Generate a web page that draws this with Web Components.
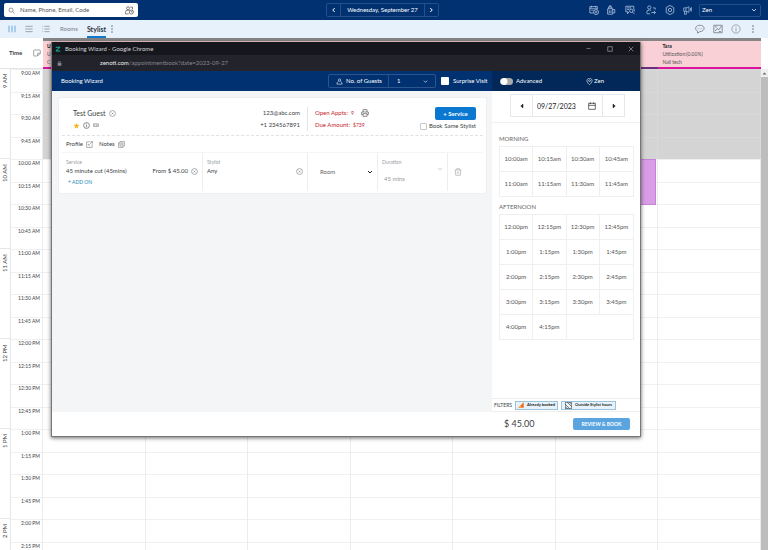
<!DOCTYPE html>
<html lang="en">
<head>
<meta charset="utf-8">
<title>Appointment Book</title>
<style>
html,body{margin:0;height:100%}
body{font-family:Lato,"Liberation Sans",sans-serif;font-size:6px;line-height:8px;color:#3c3f45;background:#fff;overflow:hidden}
</style>
</head>
<body>
<appointment-book></appointment-book>
<script>
const BASE = `<style>
*{box-sizing:border-box}
button,input,select{font:inherit;color:inherit;margin:0;padding:0;border:0;background:none;border-radius:0;outline:0}
select{appearance:none}
button{display:flex;align-items:center;justify-content:center}
</style>`;
function define(name, html, init) {
  const t = document.createElement('template');
  t.innerHTML = BASE + html;
  customElements.define(name, class extends HTMLElement {
    constructor() {
      super();
      this.attachShadow({mode: 'open'}).append(t.content.cloneNode(true));
    }
    connectedCallback() { if (init && !this.ready) { this.ready = true; init(this, this.shadowRoot); } }
  });
}

const ICONS = {
  search: '<circle cx="10.5" cy="10.5" r="7"/><path d="M16 16l6 6"/>',
  guests: '<circle cx="8" cy="6" r="4"/><path d="M1 21v-4q0-6 7-6 3 0 4 1M1 21h9"/><circle cx="17" cy="16" r="5.5"/><path d="M17 13v3h3M14 3h6v6"/>',
  left: '<path d="M15 4l-8 8 8 8"/>', right: '<path d="M9 4l8 8-8 8"/>', down: '<path d="M4 8l8 8 8-8"/>',
  calplus: '<path d="M20 10V4H2v15h9M2 9h18M6 2v4M16 2v4M6 13h3M11 13h2"/><circle cx="17" cy="17" r="6"/><path d="M17 14v6M14 17h6"/>',
  drink: '<path d="M4 9h12v13H4zM6 9V5h8v4M8 5V2h4v3M16 11h5v8h-5M8 13v6M12 13v6"/>',
  chatsearch: '<path d="M21 10V3H2v13h4v5l4-5M5 7h10M5 11h5"/><circle cx="15" cy="14" r="4"/><path d="M18 17l5 5M22 10v6"/>',
  walkin: '<circle cx="8" cy="6" r="4"/><path d="M2 20v-3q0-5 6-5 3 0 4 2M2 21h8M13 18h9M19 14l4 4-4 4M17 7h5v4"/>',
  gear: '<path d="M12 1l9 5v12l-9 5-9-5V6z"/><circle cx="12" cy="12" r="4"/>',
  horn: '<path d="M2 5h6l8-3v15l-8-3H2zM4 14v8h5v-8M8 5v9M20 5v8M23 3v12"/>',
  chat: '<path d="M12 3c13 0 13 15 0 15l-6 4v-5C-2 13 1 3 12 3z"/><path d="M7 11h1M11.500 11h1M16 11h1" stroke-width="3"/>',
  chart: '<path d="M2 3h20v18H2z"/><path d="M5 17l5-6 4 3 6-9M14 18h5M5 7h5"/>',
  info: '<circle cx="12" cy="12" r="10"/><path d="M12 10v8M12 6v2"/>',
  cols: '<path d="M3 2v20M12 2v20M21 2v20"/>', rows: '<path d="M1 4h22M1 12h22M1 20h22"/>',
  list: '<path d="M7 4h16M7 12h16M7 20h16M1 4h2M1 12h2M1 20h2"/>',
  dots: '<path d="M12 1v4M12 10v4M12 19v4" stroke-width="4"/>',
  note: '<path d="M13 21H4q-2 0-2-2V5q0-2 2-2h16q2 0 2 2v8l-8 8v-8h8"/>',
  person: '<circle cx="12" cy="7" r="4"/><path d="M9 11q-6 3-6 10h18q0-7-6-10"/>',
  pin: '<path d="M12 23C-4 9 5 1 12 1s16 8 0 22z"/><circle cx="12" cy="9" r="3"/>',
  close: '<circle cx="12" cy="12" r="10"/><path d="M9 9l6 6M15 9l-6 6"/>',
  star: '<path d="M12 3l3 6 7 1-5 5 1 7-6-3-6 3 1-7-5-5 7-1z" fill="#f2b929" stroke="none"/>',
  gift: '<path d="M2 7h20v11H2zM7 7v11M12 11h7M12 15h7"/>',
  profile: '<path d="M13 3H2v19h19V11M15 2h7v7M22 2l-8 8M6 12h5v6"/>',
  notes: '<path d="M7 2h15v15H7zM7 6H2v16h15v-5M10 7h9M10 11h9"/>',
  print: '<path d="M6 9V2h12v7M6 17H2V9h20v8h-4M6 14h12v8H6z"/>',
  trash: '<path d="M2 6h20M8 6V2h8v4M4 6l1 16h14l1-16M10 11v6M14 11v6"/>',
  calendar: '<path d="M2 4h20v18H2zM2 10h20M7 1v5M17 1v5"/>',
  tleft: '<path d="M16 4v16l-9-8z" fill="currentColor"/>', tright: '<path d="M8 4v16l9-8z" fill="currentColor"/>',
  tup: '<path d="M5 16h14l-7-8z" fill="currentColor"/>',
  lock: '<path d="M4 10h16v12H4z" fill="currentColor"/><path d="M7 10V3h10v7" stroke-width="3"/>',
  zed: '<path d="M3 3h18v3L8 18h13v4H3v-4L15 7H3z" fill="#12b5a0" stroke="none"/>',
  min: '<path d="M2 12h20"/>', max: '<path d="M3 3h18v18H3z"/>', x: '<path d="M3 3l18 18M21 3L3 21"/>',
  booked: '<path d="M1 23L23 1v22z" fill="#f06b22" stroke="none"/><path d="M1 23L12 12v11z" fill="#f9b13c" stroke="none"/>',
  hatch: '<path d="M1 1h22v22H1z"/><path d="M1 8l15 15M1 16l7 7M8 1l15 15M16 1l7 7"/>'
};
customElements.define('ui-icon', class extends HTMLElement {
  constructor() { super(); this.attachShadow({mode: 'open'}); }
  connectedCallback() {
    const s = this.getAttribute('size') || 8, w = this.getAttribute('weight') || 2;
    this.shadowRoot.innerHTML = `<style>:host{display:inline-flex;flex:none}svg{display:block}</style>
      <svg width="${s}" height="${s}" viewBox="0 0 24 24" fill="none" stroke="currentColor" stroke-width="${w}" aria-hidden="true">${ICONS[this.getAttribute('name')]}</svg>`;
  }
});

define('top-bar', `<style>
:host{display:grid;grid-template-columns:1fr auto 1fr;align-items:center;height:20px;padding:0 7px 0 4px;background:#013171;color:#fff}
.search{display:flex;align-items:center;gap:5px;width:134px;height:14px;padding:0 4px;background:#fff;border-radius:2px;color:#555;justify-self:start}
.search input{flex:1;min-width:0}
.search input::placeholder{color:#555;opacity:1}
.date{display:flex;height:14px;border:1px solid #24508c;border-radius:2px;align-items:stretch}
.date button{width:13px}
.date span{padding:0 6px;border:solid #24508c;border-width:0 1px;display:flex;align-items:center}
.right{justify-self:end;display:flex;align-items:center;gap:7px;color:#a9bfdd}
.right>button{width:10px}
.right>button.wide{width:14px}
.sel{display:flex;align-items:center;width:62px;height:13px;border:1px solid #24508c;border-radius:2px;padding:0 3px 0 2px;color:#fff}
.sel select{flex:1}
</style>
<label class="search"><ui-icon name="search" size="7"></ui-icon><input type="text" aria-label="Search" placeholder="Name, Phone, Email, Code"><ui-icon name="guests" size="9"></ui-icon></label>
<div class="date"><button aria-label="Previous day"><ui-icon name="left" size="6" weight="4"></ui-icon></button><span>Wednesday, September 27</span><button aria-label="Next day"><ui-icon name="right" size="6" weight="4"></ui-icon></button></div>
<div class="right">
<button aria-label="New appointment"><ui-icon name="calplus" size="10"></ui-icon></button>
<button aria-label="Refreshments"><ui-icon name="drink" size="10"></ui-icon></button>
<button class="wide" aria-label="Messages"><ui-icon name="chatsearch" size="10"></ui-icon></button>
<button class="wide" aria-label="Walk in"><ui-icon name="walkin" size="10"></ui-icon></button>
<button aria-label="Settings"><ui-icon name="gear" size="10"></ui-icon></button>
<button aria-label="Announcements"><ui-icon name="horn" size="9"></ui-icon></button>
<div class="sel"><select aria-label="Center"><option>Zen</option></select><ui-icon name="down" size="6" weight="3"></ui-icon></div>
</div>`);

define('view-bar', `<style>
:host{display:flex;align-items:center;justify-content:space-between;height:18px;padding:0 11px 0 8px;background:#e7f1fb;color:#777b83}
div{display:flex;align-items:center;height:100%}
.l{gap:9px}.l a{color:inherit;text-decoration:none;height:100%;display:flex;align-items:center}
.l a.on{font-weight:700;font-size:7px;color:#2d3138;box-shadow:inset 0 -2px #1479c9}
.v{gap:9px;margin-right:1px}
.l>button{margin-left:-7px}
.r{gap:8px}
</style>
<div class="l"><div class="v"><button aria-label="Columns" style="color:#2d86cf"><ui-icon name="cols"></ui-icon></button><button aria-label="Rows"><ui-icon name="rows"></ui-icon></button><button aria-label="List"><ui-icon name="list"></ui-icon></button></div>
<a href="#rooms">Rooms</a><a class="on" href="#stylist">Stylist</a><button aria-label="More views"><ui-icon name="dots"></ui-icon></button></div>
<div class="r"><button aria-label="Chat"><ui-icon name="chat" size="10"></ui-icon></button><button aria-label="Reports"><ui-icon name="chart" size="10"></ui-icon></button><button aria-label="Information"><ui-icon name="info" size="10" weight="1.500"></ui-icon></button><button aria-label="More"><ui-icon name="dots"></ui-icon></button></div>`);

define('staff-header', `<style>
:host{display:grid;grid-template-columns:43px repeat(7,1fr) 7px;height:31px}
.time{display:flex;align-items:center;justify-content:space-between;padding:0 2px 0 9px;font-weight:700;font-size:6px;border-bottom:1px solid #e4e4e6}
</style>
<div class="time">Time<ui-icon name="note" size="8" style="color:#777"></ui-icon></div><slot></slot>`);
define('staff-cell', `<style>
:host{display:block;min-width:0;border-top:3px solid #858585;border-bottom:2px solid #d9149a;background:#f9d0d5;padding:1px 4px;font-size:5px;line-height:8px;color:#555}
:host([alt]){border-bottom-color:#6b2f80}
b{display:block;color:#222}
span{display:block}
</style><b><slot name="name"></slot></b><span><slot name="use"></slot></span><span><slot name="role"></slot></span>`);

define('hour-block', `<style>
:host{display:grid;grid-template-columns:11px 32px repeat(7,1fr)}
.h{writing-mode:vertical-rl;transform:rotate(180deg);display:flex;align-items:center;justify-content:flex-end;font-size:6px;padding-bottom:5px;border-left:1px solid #e6e6e8;box-shadow:0 1px #e6e6e8}
.t,.c{display:flex;flex-direction:column;border-right:1px solid #ececee}
.t div,.c div{height:23px;border-top:1px solid #f0f0f2}
.t div:nth-child(even),.c div:nth-child(even){height:22px}
.t div{font-size:5px;line-height:7px;text-align:right;padding-right:2px}
.c{position:relative}
:host([closed]) .c{background:#d4d4d4;border-color:#dadada}
:host([closed]) .c div{border-color:#d8d8d8}
.ev{position:absolute;inset:0 1px auto 0;height:46px;background:#d89de6;border:1px solid #c582d6}
</style>`, (host, root) => {
  const n = +host.getAttribute('rows') || 4, hour = host.getAttribute('hour'), half = host.getAttribute('half');
  let html = `<div class="h">${hour} ${half}</div><div class="t">`;
  for (let i = 0; i < n; i++) html += `<div>${hour}:${['00', 15, 30, 45][i]} ${half}</div>`;
  html += '</div>';
  for (let c = 0; c < 7; c++) html += `<div class="c">${'<div></div>'.repeat(n)}${host.getAttribute('booked') == c ? '<span class="ev"></span>' : ''}</div>`;
  root.append(document.createRange().createContextualFragment(html));
});

define('guest-card', `<style>
:host{display:block;background:#fff;border:1px solid #eeeff1;border-radius:2px;padding:0 3px 2px}
.top{display:grid;grid-template-columns:1fr auto 112px auto;align-items:center;height:38px;padding:5px 7px 0 11px;border-bottom:1px dashed #dfe1e4}
.line{display:flex;align-items:center;gap:3px;height:12px}
.name{font-size:7px}
.contact{text-align:right;padding-right:7px;border-right:1px solid #e3e4e6}
.contact .line{justify-content:flex-end}
.due{padding-left:7px;color:#c4262e}
.due ui-icon{color:#555;margin-left:4px}
.due i{font-style:normal;font-size:5px}
.act{display:flex;flex-direction:column;align-items:flex-end;gap:1px}
.act button{background:#0a78d1;color:#fff;font-weight:700;width:41px;height:13px;border-radius:2px}
.act label{display:flex;align-items:center;gap:2px;height:10px}
input[type=checkbox]{appearance:none;width:7px;height:7px;border:1px solid #c4c7cb;border-radius:1px}
.links{display:flex;align-items:center;gap:6px;height:17px;padding-left:4px;border-bottom:1px solid #f4f5f6}
.links a{display:flex;align-items:center;gap:3px;color:inherit;text-decoration:none}
.links ui-icon{color:#777}
.row{display:grid;grid-template-columns:141fr 105fr 70fr 70fr 35fr;height:38px}
.row>div{border-right:1px solid #eceef0;padding:5px 4px 0;min-width:0}
.row>div:last-child{border:0}
small{display:block;font-size:5px;color:#9a9da3}
.val{display:flex;align-items:center;gap:3px;height:10px}
.sp{flex:1}
.val select{flex:1;min-width:0}
.add{color:#2287b5;text-decoration:none;font-size:5px;display:block;padding:2px 2px 0}
.mid{display:flex;align-items:center}
.x{color:#777}
</style>
<div class="top">
<div><div class="line name">Test Guest<button class="x" aria-label="Remove guest"><ui-icon name="close" size="7"></ui-icon></button></div><div class="line"><ui-icon name="star" size="7"></ui-icon><ui-icon name="info" size="7"></ui-icon><ui-icon name="gift" size="6" style="color:#777"></ui-icon></div></div>
<div class="contact"><div class="line">123@abc.com</div><div class="line">+1 234567891</div></div>
<div class="due"><div class="line">Open Appts: <i>9</i> <ui-icon name="print" size="8"></ui-icon></div><div class="line">Due Amount: <i>$739</i></div></div>
<div class="act"><button>+ Service</button><label><input type="checkbox">Book Same Stylist</label></div>
</div>
<div class="links"><a href="#profile">Profile<ui-icon name="profile" size="7"></ui-icon></a><a href="#notes">Notes<ui-icon name="notes" size="7"></ui-icon></a></div>
<div class="row">
<div><small>Service</small><div class="val">45 minute cut (45mins)<span class="sp"></span>From $ 45.00<button class="x" aria-label="Remove service"><ui-icon name="close" size="7"></ui-icon></button></div><a class="add" href="#addon">+ ADD ON</a></div>
<div><small>Stylist</small><div class="val">Any<span class="sp"></span><button class="x" aria-label="Clear stylist"><ui-icon name="close" size="7"></ui-icon></button></div></div>
<div class="mid" style="padding:0 4px 0 12px"><div class="val" style="flex:1;color:#666"><select aria-label="Room"><option>Room</option></select><ui-icon name="down" size="6" weight="4" style="color:#222"></ui-icon></div></div>
<div style="color:#999"><small>Duration</small><div class="val" style="height:18px;padding:0 0 0 2px"><select aria-label="Duration" style="padding-top:8px"><option>45 mins</option></select><ui-icon name="down" size="6" style="align-self:flex-start"></ui-icon></div></div>
<div class="mid" style="padding:0 0 0 6px;color:#aaa"><button aria-label="Delete service"><ui-icon name="trash" size="8"></ui-icon></button></div>
</div>`);

define('slot-group', `<style>
:host{display:block}
h3{margin:0;font-weight:400;font-size:6px;line-height:8px;color:#666;padding-bottom:3px}
.g{display:grid;grid-template-columns:repeat(4,1fr);border:solid #eeeff1;border-width:0 1px 1px}
.g>*{height:25px;border:solid #eeeff1;border-width:1px 1px 0 0;color:#555}
.g>:nth-child(4n),.g>:last-child{border-right:0}
</style><h3></h3><div class="g"></div>`, (host, root) => {
  root.querySelector('h3').textContent = host.getAttribute('label');
  const g = root.querySelector('.g'), times = host.getAttribute('times').split(' ');
  for (const s of times) {
    const b = document.createElement('button'); b.textContent = s; g.append(b);
  }
  const rest = (4 - times.length % 4) % 4;
  if (rest) {
    const f = document.createElement('span'); f.style.gridColumn = 'span ' + rest; g.append(f);
  }
});

define('time-picker', `<style>
:host{display:flex;flex-direction:column;background:#fff}
.date{display:flex;width:115px;height:23px;margin:3px auto 5px 18px;border:1px solid #e6e7ea;color:#222}
.date button{width:21px;flex:none}
.date label{flex:1;min-width:0;display:flex;align-items:center;gap:4px;padding:0 6px 0 4px;border:solid #e6e7ea;border-width:0 1px;font-size:7px}
.date input{flex:1;min-width:0}
.slots{flex:1;display:flex;flex-direction:column;gap:6px;padding:12px 6px 0 7px;border-top:1px solid #f0f1f3}
.filters{display:flex;align-items:center;gap:3px;height:14px;padding:0 2px;font-size:5px;border-top:1px solid #eee;border-bottom:1px solid #eee}
.filters button{height:9px;gap:3px;padding:0 2px;background:#e7f2fa;border:1px solid #9cc3de;color:#222;font-size:4px;font-weight:700}
.filters button:last-child{padding:0 3px}
.pay{display:flex;align-items:center;justify-content:space-between;height:24px;padding:0 10px 0 12px;font-size:9px}
.pay button{width:57px;height:12px;background:#5aa5e0;color:#fff;border-radius:2px;font-size:5px;font-weight:700}
</style>
<div class="date"><button aria-label="Previous"><ui-icon name="tleft" size="6"></ui-icon></button><label><input type="text" aria-label="Date" value="09/27/2023"><ui-icon name="calendar" size="8"></ui-icon></label><button aria-label="Next"><ui-icon name="tright" size="6"></ui-icon></button></div>
<div class="slots">
<slot-group label="MORNING" times="10:00am 10:15am 10:30am 10:45am 11:00am 11:15am 11:30am 11:45am"></slot-group>
<slot-group label="AFTERNOON" times="12:00pm 12:15pm 12:30pm 12:45pm 1:00pm 1:15pm 1:30pm 1:45pm 2:00pm 2:15pm 2:30pm 2:45pm 3:00pm 3:15pm 3:30pm 3:45pm 4:00pm 4:15pm"></slot-group>
</div>
<div class="filters">FILTERS<button><ui-icon name="booked" size="6"></ui-icon>Already booked</button><button><ui-icon name="hatch" size="7"></ui-icon>Outside Stylist hours</button></div>
<div class="pay">$ 45.00<button>REVIEW &amp; BOOK</button></div>`);

define('booking-window', `<style>
:host{display:block;border:1px solid #777;border-top:0;background:#fff;box-shadow:0 1px 4px rgba(0,0,0,.6)}
.title{display:flex;align-items:center;gap:4px;height:13px;padding:0 5px 0 3px;background:#15171c;color:#d4d5d8}
.title span{flex:1}
.title button{width:9px;margin-left:8px}
.url{display:flex;align-items:center;height:16px;padding:0 5px;background:#22232b;color:#85878e}
.url b{font-weight:400;color:#eee}
.url p{margin:0 0 0 38px}
.head,.body{display:grid;grid-template-columns:1fr 148px}
.head{height:20px;background:#013171;color:#fff}
.head>div{display:flex;align-items:center}
.a{padding:0 2px 0 9px;gap:5px}
.a h1{margin:0;flex:1;font-size:6px;font-weight:400}
.guests{display:flex;align-items:center;width:108px;height:14px;border:1px solid #2c568f;border-radius:2px;padding:0 7px}
.guests label{display:flex;align-items:center;gap:3px;flex:1;white-space:nowrap}
.guests select{width:35px;padding-left:8px;height:12px;border-left:1px solid #24508c}
.chk{display:flex;align-items:center;gap:4px;white-space:nowrap;width:49px}
.chk input{appearance:none;width:8px;height:8px;background:#fff;border-radius:1px}
.b{background:#022759;padding:0 36px 0 8px;justify-content:space-between}
.tog{display:flex;align-items:center;gap:3px}
.tog input{appearance:none;width:13px;height:7px;border-radius:4px;background:radial-gradient(circle at 4px 50%,#fff 3px,#aaa 4px)}
.loc{display:flex;align-items:center;gap:1px}
.body{min-height:345px}
.left{display:flex;flex-direction:column;background:#f4f5f7;min-width:0}
.left main{flex:1;padding:6px 5px 0 6px}
.left footer{height:24px;background:#fff}
</style>
<div class="title"><ui-icon name="zed" size="6"></ui-icon><span>Booking Wizard - Google Chrome</span><button aria-label="Minimize"><ui-icon name="min" size="5"></ui-icon></button><button aria-label="Maximize"><ui-icon name="max" size="6"></ui-icon></button><button aria-label="Close"><ui-icon name="x" size="6"></ui-icon></button></div>
<div class="url"><ui-icon name="lock" size="5"></ui-icon><p><b>zenoti.com</b>/appointmentbook?date=2023-09-27</p></div>
<div class="head"><div class="a"><h1>Booking Wizard</h1><div class="guests"><label for="n"><ui-icon name="person" size="7"></ui-icon>No. of Guests</label><select id="n"><option>1</option></select><ui-icon name="down" size="5" weight="3"></ui-icon></div><label class="chk"><input type="checkbox">Surprise Visit</label></div>
<div class="b"><label class="tog"><input type="checkbox" role="switch">Advanced</label><span class="loc"><ui-icon name="pin" size="7"></ui-icon>Zen</span></div></div>
<div class="body"><div class="left"><main><guest-card></guest-card></main><footer></footer></div><time-picker></time-picker></div>`);

define('appointment-book', `<style>
:host{display:flex;flex-direction:column;height:100vh;overflow:hidden;position:relative}
.cal{flex:1;min-height:0;display:grid;grid-template-columns:1fr 7px}
.hours{overflow:hidden}
.bar{background:#bdbdbd;color:#666}
.bar button{width:7px;height:8px;background:#eee}
booking-window{position:absolute;inset:42px 127px auto 51px}
</style>
<top-bar></top-bar><view-bar></view-bar>
<staff-header>
<staff-cell><span slot="name">U</span><span slot="use">U</span><span slot="role">C</span></staff-cell>
<staff-cell></staff-cell><staff-cell></staff-cell><staff-cell></staff-cell><staff-cell></staff-cell><staff-cell alt></staff-cell>
<staff-cell><span slot="name">Tara</span><span slot="use">Utilization:(0.00%)</span><span slot="role">Nail tech</span></staff-cell>
</staff-header>
<div class="cal"><div class="hours">
<hour-block hour="9" half="AM" closed></hour-block><hour-block hour="10" half="AM" booked="5"></hour-block><hour-block hour="11" half="AM"></hour-block><hour-block hour="12" half="PM"></hour-block><hour-block hour="1" half="PM"></hour-block><hour-block hour="2" half="PM" rows="2"></hour-block>
</div><div class="bar"><button aria-label="Scroll up"><ui-icon name="tup" size="5"></ui-icon></button></div></div>
<booking-window></booking-window>`);
</script>
</body>
</html>
